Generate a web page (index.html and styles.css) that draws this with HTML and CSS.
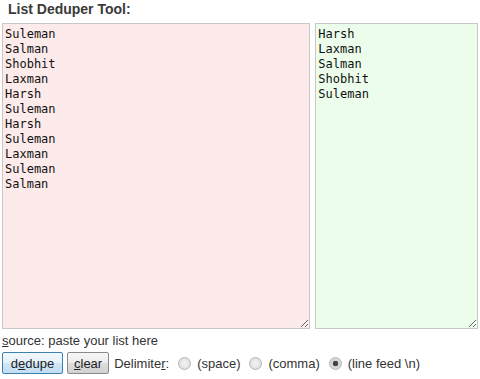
FILE: index.html
```html
<!DOCTYPE html>
<html lang="en">
<head>
    <meta charset="UTF-8">
    <title>List Deduper Tool</title>
    <link rel="stylesheet" href="styles.css">
</head>
<body>
    <div class="tool">
        <h3 class="title">List Deduper Tool:</h3>

        <div class="panes">
            <textarea class="pane source" spellcheck="false">Suleman
Salman
Shobhit
Laxman
Harsh
Suleman
Harsh
Suleman
Laxman
Suleman
Salman</textarea>
            <textarea class="pane result" spellcheck="false">Harsh
Laxman
Salman
Shobhit
Suleman</textarea>
        </div>

        <div class="hint"><u>s</u>ource: paste your list here</div>

        <div class="controls">
            <button type="button" class="btn primary">d<u>e</u>dupe</button>
            <button type="button" class="btn"><u>c</u>lear</button>
            <span class="label">Delimite<u>r</u>:</span>
            <label class="opt"><input type="radio" name="delim"> (space)</label>
            <label class="opt"><input type="radio" name="delim"> (comma)</label>
            <label class="opt"><input type="radio" name="delim" checked> (line feed \n)</label>
        </div>
    </div>
</body>
</html>
```

FILE: styles.css
```css
body {
    margin: 0;
    padding: 0 2px;
    font-family: Arial, "Liberation Sans", sans-serif;
    font-size: 13px;
    color: #333;
    background: #fff;
}

.title {
    margin: 0 0 0 6px;
    font-size: 14px;
    font-weight: bold;
    line-height: 18px;
    color: #3a3a3a;
}

.panes {
    display: flex;
    gap: 5px;
    margin-top: 5px;
}

.pane {
    height: 306px;
    margin: 0;
    padding: 3px 2px 2px;
    border: 1px solid #c8c8c8;
    box-sizing: border-box;
    font-family: "DejaVu Sans Mono", monospace;
    font-size: 12px;
    line-height: 15px;
    color: #111;
    resize: both;
}

.pane.source {
    width: 309px;
    background: #fdebeb;
}

.pane.result {
    width: 163px;
    background: #ecfeeb;
}

.hint {
    margin-top: 4px;
    line-height: 16px;
}

.controls {
    display: flex;
    align-items: center;
    gap: 4px;
    margin-top: 3px;
}

.btn {
    font-family: Arial, "Liberation Sans", sans-serif;
    font-size: 13px;
    color: #222;
    height: 22px;
    padding: 1px 6px 0;
    border: 1px solid #8a8a8a;
    border-radius: 2px;
    background: linear-gradient(#f6f6f6 0%, #ececec 50%, #dddddd 51%, #d2d2d2 100%);
}

.btn.primary {
    width: 61px;
    border-color: #3c7fb1;
    background: linear-gradient(#f2f8fd 0%, #e4f0fa 50%, #d0e6f7 51%, #c3ddf3 100%);
}

.label {
    margin-left: 1px;
}

.opt {
    display: flex;
    align-items: center;
    gap: 6px;
    margin-left: 5px;
}

.opt input {
    appearance: none;
    width: 13px;
    height: 13px;
    margin: 0;
    border: 1px solid #b5b5b5;
    border-radius: 50%;
    background: radial-gradient(#f4f4f4, #d8d8d8);
}

.opt input:checked {
    background: radial-gradient(circle, #444 0 2.5px, #cfcfcf 3px, #e8e8e8 100%);
}
```
